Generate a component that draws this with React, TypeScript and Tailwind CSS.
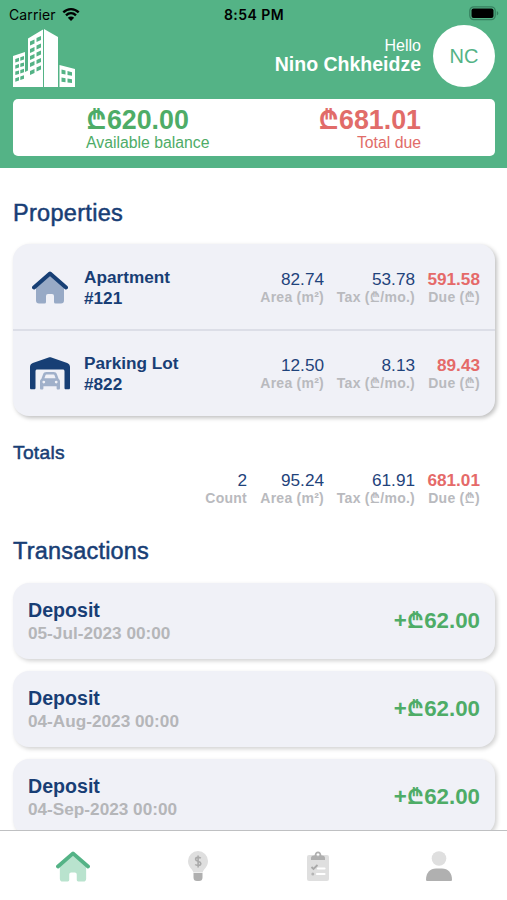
import type { ReactNode } from 'react';

type Stat = { value: string; label: ReactNode; width: string; due?: boolean };

const Lari = () => <span className="text-[1.04em] font-semibold leading-none [font-family:Inter,'DejaVu_Sans',sans-serif]">₾</span>;

// the thinner sign used in the column captions
const LariSmall = () => <span className="text-[1em] font-medium leading-none [font-family:Inter,'DejaVu_Sans',sans-serif]">₾</span>;

const House = ({ roof, body, className }: { roof: string; body: string; className: string }) => (
  <svg viewBox="0 0 36 33" className={className}>
    <path d="M18 4 32 16v13.5a3 3 0 0 1-3 3h-5.5a1.5 1.5 0 0 1-1.5-1.5v-6a2 2 0 0 0-2-2h-4a2 2 0 0 0-2 2v6a1.5 1.5 0 0 1-1.5 1.5H7a3 3 0 0 1-3-3V16z" fill={body} />
    <path d="M2 16.5 18 2.5l16 14" fill="none" stroke={roof} strokeWidth="4" strokeLinecap="round" strokeLinejoin="round" />
  </svg>
);

const Garage = () => (
  <svg viewBox="0 0 40 33" className="h-[33px] w-10">
    <path d="M0 31V10c0-2 1-3.2 2.8-4L18.6.5c1-.4 1.8-.4 2.8 0L37.2 6c1.8.8 2.8 2 2.8 4v21c0 .8-.5 1.3-1.3 1.3h-2.900c-.8 0-1.300-.5-1.300-1.300V14.200c0-1-.7-1.700-1.700-1.700H7.200c-1 0-1.700.7-1.700 1.700V31c0 .8-.5 1.300-1.300 1.300H1.300C.5 32.300 0 31.800 0 31z" fill="#173f75" />
    <path fillRule="evenodd" d="m11.300 22 1.700-4.600c.6-1.600 1.700-2.400 3.300-2.400h7.400c1.600 0 2.700.8 3.300 2.400l1.700 4.600c.9.600 1.300 1.500 1.300 2.600v6.600c0 .8-.5 1.300-1.300 1.300h-.8c-.8 0-1.300-.5-1.300-1.300v-2H13.400v2c0 .8-.5 1.300-1.300 1.300h-.8c-.8 0-1.300-.5-1.300-1.300v-6.600c0-1.100.4-2 1.300-2.600zm3.100-.8h11.200l-1.200-3.200c-.1-.3-.4-.5-.8-.5h-7.200c-.4 0-.7.2-.8.5zm-.6 5.300a1.400 1.400 0 1 0 0-2.800 1.400 1.400 0 0 0 0 2.800zm12.400 0a1.400 1.400 0 1 0 0-2.800 1.400 1.400 0 0 0 0 2.800z" fill="#a0b0ca" />
  </svg>
);

const Logo = () => (
  <svg viewBox="0 0 62 58" className="h-[58px] w-[62px]">
    <path d="M0 58V27l12-4v20l3-1.500V9.500L30 .5V58zM31 0 45 8v50H31zM46.500 36 62 40v18H46.500z" fill="#fff" />
    <g fill="#54b386">
      <path d="m17 12.500 4.500-2v4l-4.500 2zM23.500 9l4.500-2v4l-4.500 2zM17 20l4.500-2v4L17 24zM23.500 16.500l4.500-2v4l-4.500 2zM17 27l4.500-2v4L17 31zM23.500 23.500l4.500-2v4l-4.500 2zM17 34l4.500-2v4L17 38zM23.500 31l4.500-2v4l-4.500 2zM17 42l4.500-2v4L17 46zM23.500 38.500l4.500-2v4l-4.500 2z" />
      <path d="m2.300 30 3.700-1.200v3.500L2.300 33.500zM7.300 28.300 11 27v3.500l-3.700 1.200zM2.300 36.300 6 35.100v3.500l-3.700 1.200zM7.300 34.600l3.700-1.200v3.500l-3.700 1.200zM2.300 42.600 6 41.400v3.500l-3.700 1.200zM7.300 40.900l3.700-1.200v3.500l-3.700 1.200zM2.300 49.200 6 48v3.500l-3.700 1.200zM7.300 47.500l3.700-1.200v3.500L7.300 51z" />
      <path d="m48.500 40.500 4 1v4l-4-.8zM54.500 42l4.500 1.200v3.600l-4.500-.8zM48.500 48.500l4 .8v4l-4-.5zM54.500 49.500l4.500.8V54l-4.500-.5z" />
    </g>
  </svg>
);

const StatusBar = () => (
  <div className="flex h-7 items-center justify-between pl-[9px] pr-2 text-[14px] text-black [font-family:Inter,sans-serif]">
    <div className="flex w-[100px] items-center gap-[6px]">
      <span className="tracking-[0.1px]">Carrier</span>
      <svg viewBox="0 0 18 14" className="-mt-px h-[14px] w-[18px]">
        <path d="M1.300 5.300c4.400-4.300 11-4.300 15.400 0M4 8.400c2.900-2.800 7.100-2.800 10 0" fill="none" stroke="#000" strokeWidth="2.400" />
        <path d="M9 14 5.800 10.700c1.800-1.700 4.600-1.700 6.400 0z" />
      </svg>
    </div>
    <span className="font-semibold tracking-[0.45px]">8:54 PM</span>
    <div className="-mt-[2px] flex w-[100px] items-center justify-end">
      <svg viewBox="0 0 30 15" className="h-[15px] w-[30px]">
        <rect x=".8" y=".8" width="25.400" height="12.800" rx="4" fill="none" stroke="#36805f" strokeWidth="1.300" />
        <rect x="2.500" y="2.500" width="22" height="9.500" rx="2" />
        <path d="M27.800 5c2 .8 2 3.700 0 4.500z" fill="#36805f" />
      </svg>
    </div>
  </div>
);

const Stats = ({ items }: { items: Stat[] }) => (
  <div className="flex">
    {items.map((item, i) => (
      <div key={i} className={`flex flex-col items-end whitespace-nowrap ${item.width}`}>
        <span className={`text-[17.200px] leading-[19px] ${item.due ? 'font-bold text-[#e56a69]' : 'text-[#1f437b]'}`}>{item.value}</span>
        <span className="h-[17px] text-[14px] font-bold leading-[17px] tracking-[0.25px] text-[#b9babe]">{item.label}</span>
      </div>
    ))}
  </div>
);

const stats = (area: string, tax: string, due: string): Stat[] => [
  { value: area, label: 'Area (m²)', width: 'w-[77px]' },
  { value: tax, label: <>Tax (<LariSmall />/mo.)</>, width: 'w-[91px]' },
  { value: due, label: <>Due (<LariSmall />)</>, width: 'w-[65px]', due: true },
];

const properties = [
  { name: 'Apartment', number: '#121', icon: <House roof="#173f75" body="#98aac6" className="h-[33px] w-9" />, stats: stats('82.74', '53.78', '591.58') },
  { name: 'Parking Lot', number: '#822', icon: <Garage />, stats: stats('12.50', '8.13', '89.43') },
];

const transactions = ['05-Jul-2023 00:00', '04-Aug-2023 00:00', '04-Sep-2023 00:00'];

const TabBar = () => (
  <nav className="flex h-[70px] shrink-0 items-start border-t border-[#bfc0c2] bg-white pl-[12px] pt-5">
    <div className="flex w-[121px] justify-center">
      <House roof="#54b386" body="#b9e3ce" className="h-[31px] w-[34px]" />
    </div>
    <div className="flex w-[130px] justify-center">
      <svg viewBox="0 0 20 31" className="h-[31px] w-5">
        <path d="M5.200 21.500C5 18 0 16.500 0 10a10 10 0 0 1 20 0c0 6.500-5 8-5.200 11.500z" fill="#dfdfdf" />
        <path d="M5.500 22h9v4.500a3.500 3.500 0 0 1-3.500 3.500H9a3.500 3.500 0 0 1-3.500-3.500z" fill="#b0b0b0" />
        <path d="M12.800 7.300C11.500 6 7.600 5.900 7.600 8.200c0 2.700 5.200 1.500 5.200 4.300 0 2.500-4.100 2.300-5.600 1M10.100 4.500v12" fill="none" stroke="#aaa" strokeWidth="1.600" />
      </svg>
    </div>
    <div className="flex w-[110px] justify-center">
      <svg viewBox="0 0 22 30" className="h-[30px] w-[22px]">
        <rect y="4" width="22" height="26" rx="2" fill="#dfdfdf" />
        <path fillRule="evenodd" d="M4 9V7.300C4 5.500 5 4.500 7 4.500h.5C8 1.700 9 .5 11 .5s3 1.200 3.500 4h.5c2 0 3 1 3 2.800V9zM11 5.300A1.500 1.500 0 1 0 11 2.300a1.500 1.500 0 0 0 0 3z" fill="#afafaf" />
        <path d="m4.500 16 2 2 4-4" fill="none" stroke="#a9a9a9" strokeWidth="1.800" />
        <circle cx="5.800" cy="23" r="1.500" fill="#b5b5b5" />
        <path d="M11 17.500h6.500M10 23h7.500" stroke="#fff" strokeWidth="2.200" strokeLinecap="round" />
      </svg>
    </div>
    <div className="flex w-[132px] justify-center">
      <svg viewBox="0 0 26 30" className="h-[30px] w-[26px]">
        <circle cx="13" cy="7.500" r="7.300" fill="#dfdfdf" />
        <path d="M1.500 30C.5 30 0 29.500 0 28.500 0 22 4 17.500 10 17.500h6c6 0 10 4.500 10 11 0 1-.5 1.500-1.500 1.500z" fill="#b0b0b0" />
      </svg>
    </div>
  </nav>
);

const App = () => {
  return (
    <div className="flex h-[900px] w-[507px] flex-col overflow-hidden bg-white text-[#183e75] [font-family:'Liberation_Sans',Arial,sans-serif]">
      <header className="h-[168px] shrink-0 bg-[#54b386]">
        <StatusBar />
        <div className="flex h-[60px] items-center justify-between pl-[13px] pr-3">
          <Logo />
          <div className="flex items-center gap-3">
            <div className="-mt-[5px] flex flex-col items-end text-white">
              <span className="text-[16px] leading-[17px]">Hello</span>
              <span className="text-[19.500px] font-bold leading-5">Nino Chkheidze</span>
            </div>
            <div className="-mt-1 flex size-[62px] items-center justify-center rounded-full bg-white text-[20px] text-[#54b386]">NC</div>
          </div>
        </div>
        <div className="ml-[13px] mr-3 mt-[11px] flex h-[57px] justify-between rounded-[5px] bg-white pl-[73px] pr-[74px] pt-[7px]">
          <div className="flex flex-col text-[#4eac67]">
            <span className="h-7 text-[26.800px] font-bold leading-7"><Lari />620.00</span>
            <span className="text-[15.800px] leading-[18px]">Available balance</span>
          </div>
          <div className="flex flex-col items-end text-[#e16c69]">
            <span className="h-7 text-[26.800px] font-bold leading-7"><Lari />681.01</span>
            <span className="text-[15.800px] leading-[18px]">Total due</span>
          </div>
        </div>
      </header>

      <main className="min-h-0 flex-1 overflow-hidden px-[13px] pt-[31px]">
        <h2 className="text-[23.500px] leading-7 tracking-[0.3px] [-webkit-text-stroke:0.5px_#183e75]">Properties</h2>

        <section className="mt-[17px] w-[482px] divide-y-2 divide-[#dcdee7] rounded-[16px] bg-[#f0f1f7] shadow-[2px_2px_4px_rgba(0,0,0,0.25)]">
          {properties.map((property) => (
            <div key={property.number} className="flex h-[86px] items-center pr-[15px] pt-[2px] first:h-[87px] last:h-[85px] last:pt-0">
              <div className="flex w-[71px] justify-center pl-[2px]">{property.icon}</div>
              <div className="flex-1 text-[17.200px] font-bold leading-[21px]">
                <div>{property.name}</div>
                <div>{property.number}</div>
              </div>
              <Stats items={property.stats} />
            </div>
          ))}
        </section>

        <h3 className="mt-[26px] text-[19.200px] leading-[22px] tracking-[0.3px] [-webkit-text-stroke:0.5px_#183e75]">Totals</h3>
        <div className="mt-[7px] flex justify-end pr-[14px]">
          <Stats items={[{ value: '2', label: 'Count', width: 'w-[60px]' }, ...stats('95.24', '61.91', '681.01')]} />
        </div>

        <h2 className="mt-[30px] text-[23.500px] leading-7 tracking-[0.2px] [-webkit-text-stroke:0.5px_#183e75]">Transactions</h2>
        <div className="mt-[18px] flex w-[482px] flex-col gap-3">
          {transactions.map((date) => (
            <div key={date} className="flex h-[76px] items-center justify-between rounded-[16px] bg-[#f0f1f7] pl-[15px] pr-[15px] shadow-[2px_2px_4px_rgba(0,0,0,0.18)]">
              <div className="font-bold">
                <div className="text-[19.600px] leading-6">Deposit</div>
                <div className="text-[17.200px] leading-[22px] text-[#b5b6b9]">{date}</div>
              </div>
              <div className="text-[22.300px] font-bold text-[#4eac67]">+<Lari />62.00</div>
            </div>
          ))}
        </div>
      </main>

      <TabBar />
    </div>
  );
};

export default App;
